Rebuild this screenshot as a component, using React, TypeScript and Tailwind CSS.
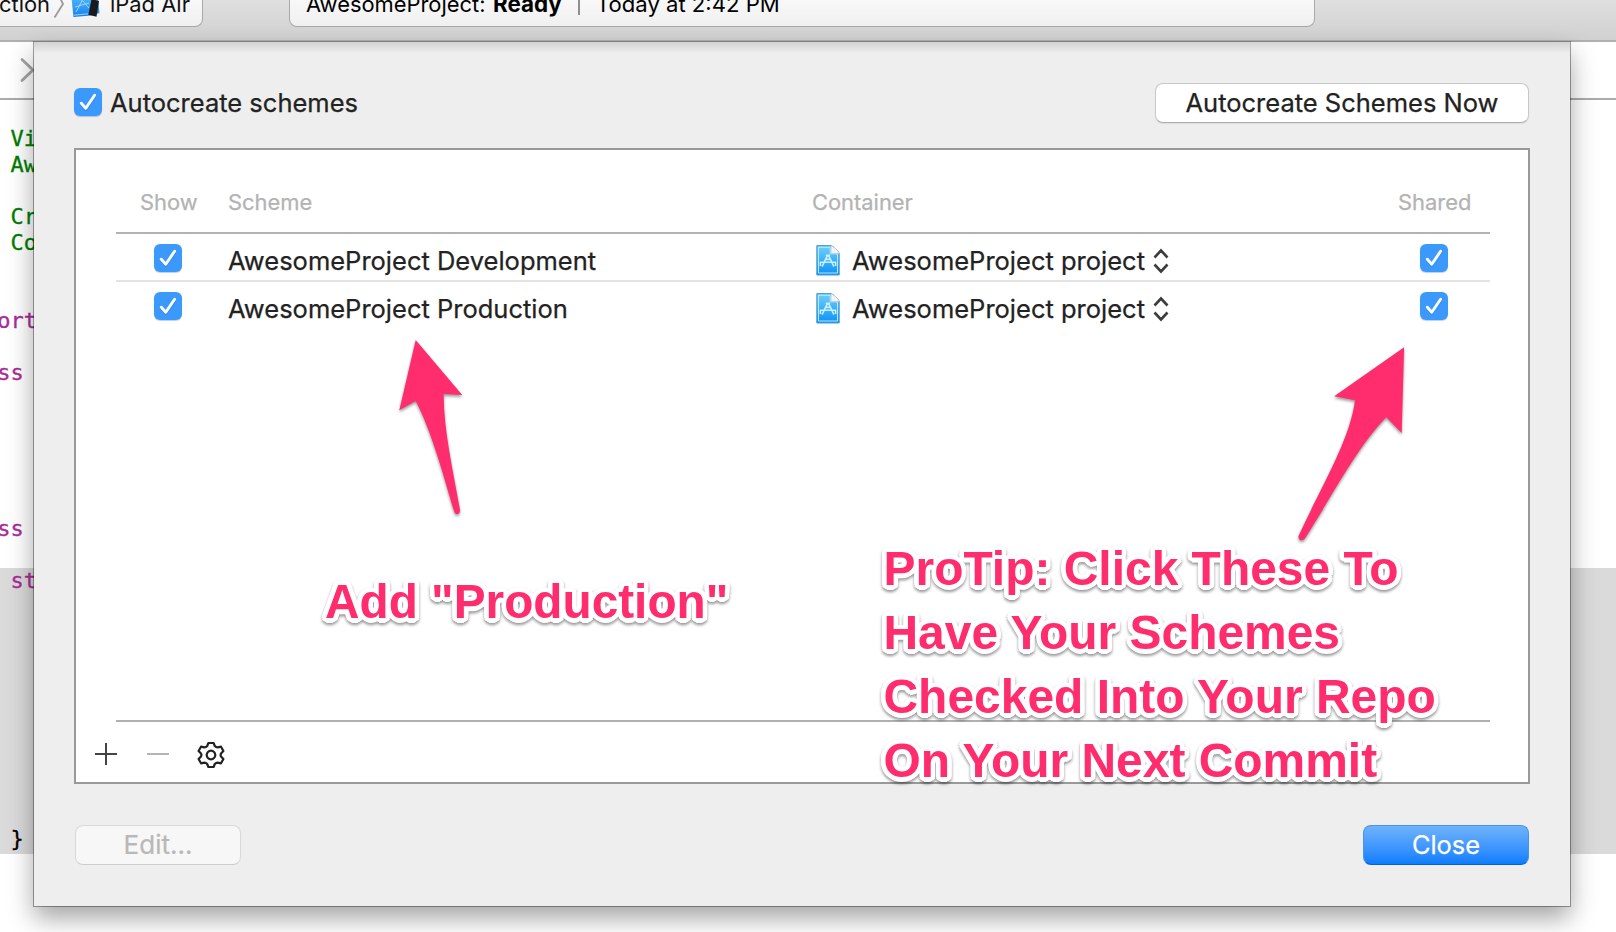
import React from "react";

const GREEN = "text-[#007d00]";
const PURPLE = "text-[#aa2b97]";

const CODE = [
  { text: "  View", c: GREEN },
  { text: "  Awes", c: GREEN },
  { text: "", c: "" },
  { text: "  Crea", c: GREEN },
  { text: "  Copy", c: GREEN },
  { text: "", c: "" },
  { text: "", c: "" },
  { text: " ort", c: PURPLE },
  { text: "", c: "" },
  { text: " ss", c: PURPLE },
  { text: "", c: "" },
  { text: "", c: "" },
  { text: "", c: "" },
  { text: "", c: "" },
  { text: "", c: "" },
  { text: " ss", c: PURPLE },
  { text: "", c: "" },
  { text: "  sta", c: PURPLE },
  { text: "", c: "" },
  { text: "", c: "" },
  { text: "", c: "" },
  { text: "", c: "" },
  { text: "", c: "" },
  { text: "", c: "" },
  { text: "", c: "" },
  { text: "", c: "" },
  { text: "", c: "" },
  { text: "  }", c: "text-black leading-[22px]" },
];

function Check() {
  return (
    <span className="block size-[28px] shrink-0 rounded-[6px] bg-[#3b99fc] shadow-[0_1px_1px_rgba(0,60,140,0.25)]">
      <svg viewBox="0 0 28 28" className="size-[28px]" fill="none">
        <path d="M7.3 15.6 L11.8 20.6 L20.6 7.6" stroke="#1f6fc4" strokeOpacity="0.35" strokeWidth="3" strokeLinecap="round" strokeLinejoin="round" transform="translate(0 1)" />
        <path d="M7.3 15.2 L11.8 20.2 L20.6 7.3" stroke="#fff" strokeWidth="2.9" strokeLinecap="round" strokeLinejoin="round" />
      </svg>
    </span>
  );
}

function ProjectIcon() {
  return (
    <svg viewBox="0 0 24 31" className="h-[31px] w-[24px] shrink-0" fill="none">
      <defs>
        <linearGradient id="doc" x1="0" y1="0" x2="0" y2="1">
          <stop offset="0" stopColor="#6fd0fb" />
          <stop offset="1" stopColor="#0a93f5" />
        </linearGradient>
      </defs>
      <path d="M0.8 0.6 H15 C17 1 23 6 23.2 9 V30 H0.8 Z" fill="url(#doc)" stroke="#4a9cc8" />
      <path d="M2.5 28 V2.3 H14.2 V8.8 H21.5 V28 Z" stroke="#c8ecff" strokeWidth="0.9" />
      <path d="M15 0.8 V8.4 H23.2 C22.5 6 18 1.6 15 0.8 Z" fill="#f4f4f4" stroke="#b9c6cc" strokeWidth="0.7" />
      <path d="M11.4 10.4 L6.4 21 M12.6 10.4 L17.6 21 M10.4 10.2 H13.6 M4.4 17.2 H19.6 M4.4 17.2 V20.4 M19.6 17.2 V20.4 M9.5 14.4 H14.5" stroke="#c9efff" strokeWidth="1.6" strokeLinecap="round" />
    </svg>
  );
}

function Arrows() {
  return (
    <svg viewBox="0 0 16 26" className="h-[26px] w-[16px] shrink-0" fill="none" stroke="#3d3d3d" strokeWidth="2.6">
      <path d="M1.5 9.5 L8 2.5 L14.5 9.5 M1.5 16.5 L8 23.5 L14.5 16.5" />
    </svg>
  );
}

function Row({ name }: { name: string }) {
  return (
    <div className="flex h-[46px] items-start text-[25.5px] leading-[30px] text-[#222]">
      <div className="w-[112px] pt-[10px] pl-[38px]"><Check /></div>
      <div className="w-[588px] pt-[12px]">{name}</div>
      <div className="flex w-[604px] pt-[11px]">
        <ProjectIcon />
        <span className="ml-[12px] pt-[1px]">AwesomeProject project</span>
        <span className="ml-[8px] pt-[3px]"><Arrows /></span>
      </div>
      <div className="-mr-[2px] pt-[10px]"><Check /></div>
    </div>
  );
}

const HALO =
  "[text-shadow:4.5px_0_#fff,4.2px_1.7px_#fff,3.2px_3.2px_#fff,1.7px_4.2px_#fff,0_4.5px_#fff,-1.7px_4.2px_#fff,-3.2px_3.2px_#fff,-4.2px_1.7px_#fff,-4.5px_0_#fff,-4.2px_-1.7px_#fff,-3.2px_-3.2px_#fff,-1.7px_-4.2px_#fff,0_-4.5px_#fff,1.7px_-4.2px_#fff,3.2px_-3.2px_#fff,4.2px_-1.7px_#fff,2px_2px_#fff,-2px_2px_#fff,2px_-2px_#fff,-2px_-2px_#fff] [filter:drop-shadow(0_2px_1.5px_rgba(0,0,0,0.42))]";

function Callout({ lines, className }: { lines: string[]; className: string }) {
  return (
    <div className={"absolute font-['Liberation_Sans',Arial,sans-serif] leading-[64px] font-bold whitespace-pre text-[#ff2d6d] " + HALO + " " + className}>
      {lines.map((l) => <div key={l}>{l}</div>)}
    </div>
  );
}

export default function App() {
  return (
    <div className="relative h-[932px] w-[1616px] overflow-hidden bg-white font-['Inter',sans-serif] text-[#222]">
      <div className="flex h-[42px] justify-start border-b-2 border-[#b0b0b0] bg-linear-to-b from-[#dfdfdf] to-[#d1d1d1] text-[21.9px] leading-[26px] text-[#111]">
        <div className="flex h-[27px] w-[203px] overflow-hidden rounded-br-[8px] border-r border-b border-[#a9a9a9] bg-linear-to-b from-[#f8f8f8] to-[#f0f0f0]">
          <span className="-mt-[9px] flex w-[50px] justify-end">ction</span>
          <svg viewBox="0 0 14 24" className="ml-[3px] h-[24px] w-[14px] shrink-0" fill="none" stroke="#9a9a9a" strokeWidth="1.8"><path d="M6 -4 L10 4 L1.5 17.5" /></svg>
          <svg viewBox="0 0 30 24" className="ml-[4px] h-[24px] w-[30px] shrink-0">
            <defs>
              <linearGradient id="app" x1="0" y1="0" x2="0" y2="1">
                <stop offset="0" stopColor="#4db4fb" />
                <stop offset="1" stopColor="#1480ee" />
              </linearGradient>
            </defs>
            <path d="M0.5 -2 H27 L28.5 13 L20 15.5 L2.5 17 Z" fill="url(#app)" />
            <path d="M2.8 15.2 L17 13.8 M5 12 L12 -1 M9 -2 L18 8 M4 7 L18 3" stroke="#9ad6ff" strokeWidth="1" fill="none" />
            <path d="M20.5 -1 L28 1 L25.5 16.8 L17.5 14.8 Z" fill="#1a1a1a" />
          </svg>
          <span className="-mt-[9px] ml-[9px] whitespace-nowrap">iPad Air</span>
        </div>
        <div className="ml-[86px] flex h-[27px] w-[1026px] overflow-hidden rounded-b-[8px] border border-t-0 border-[#a9a9a9] bg-linear-to-b from-[#f8f8f8] to-[#f0f0f0] pl-[16px] text-black">
          <span className="-mt-[9px] w-[187px] whitespace-nowrap">AwesomeProject:</span>
          <span className="-mt-[9px] w-[85px] text-[22.4px] font-bold">Ready</span>
          <span className="h-[15px] w-[2px] bg-[#8f8f8f]" />
          <span className="-mt-[9px] ml-[16px] text-[22.1px] whitespace-nowrap">Today at 2:42 PM</span>
        </div>
      </div>
      <div className="flex h-[58px] items-start border-b-2 border-[#ababab] pt-[14px] pl-[20px]">
        <svg viewBox="0 0 16 28" className="h-[28px] w-[16px]" fill="none" stroke="#a3a3a3" strokeWidth="2.8" strokeLinecap="round"><path d="M2 3.5 L13 14 L2 24.5" /></svg>
      </div>
      <div className="pt-[26px] font-['DejaVu_Sans_Mono',monospace] text-[22px] leading-[26px] whitespace-pre [-webkit-text-stroke:0.3px_currentColor]">
        {CODE.map((l, i) => (
          <div key={i} className={"h-[26px] " + l.c + (i >= 17 ? " bg-[#dadada]" : "")}>
            <span className="-ml-[16px]">{l.text}</span>
          </div>
        ))}
      </div>

      <div className="absolute top-[42px] left-[34px] flex h-[864px] w-[1536px] flex-col bg-[#eeeeee] px-[40px] shadow-[0_0_0_1px_rgba(0,0,0,0.35),0_12px_24px_rgba(0,0,0,0.36)] [-webkit-text-stroke:0.25px_currentColor]">
        <div className="absolute inset-x-0 -top-px h-[12px] border-t border-[#808080] bg-linear-to-b from-[#d2d2d2] to-[#eeeeee]" />
        <div className="flex h-[106px] items-start justify-between pt-[41px]">
          <div className="flex pt-[5px] text-[25.5px] leading-[30px]">
            <Check />
            <span className="ml-[8px]">Autocreate schemes</span>
          </div>
          <button className="mr-px h-[40px] w-[374px] rounded-[8px] border border-[#c8c8c8] border-b-[#adadad] bg-white text-[25.5px] leading-[34px] whitespace-nowrap shadow-[0_1px_1px_rgba(0,0,0,0.08)] [-webkit-text-stroke:0.25px_currentColor]">Autocreate Schemes Now</button>
        </div>
        <div className="h-[636px] w-[1456px] border-2 border-[#999999] bg-white pr-[38px] pl-[40px]">
          <div className="flex h-[84px] items-start border-b-2 border-[#b2b2b2] pt-[38px] text-[21.9px] leading-[28px] text-[#b3b3b3]">
            <span className="w-[88px] pl-[24px]">Show</span>
            <span className="ml-[24px] w-[584px]">Scheme</span>
            <span className="w-[586px]">Container</span>
            <span>Shared</span>
          </div>
          <Row name="AwesomeProject Development" />
          <div className="h-[2px] bg-[#e3e3e3]" />
          <Row name="AwesomeProject Production" />
          <div className="h-[394px] border-b-2 border-[#b0b0b0]" />
          <div className="-ml-[22px] flex pt-[18px]">
            <svg viewBox="0 0 24 28" className="h-[28px] w-[24px]" stroke="#444" strokeWidth="2"><path d="M1 14 H23 M12 3 V25" /></svg>
            <svg viewBox="0 0 24 28" className="ml-[28px] h-[28px] w-[24px]" stroke="#b5b5b5" strokeWidth="2"><path d="M1 14 H23" /></svg>
            <svg viewBox="-15 -15 30 30" className="ml-[26px] h-[30px] w-[30px]" fill="none" stroke="#222" strokeWidth="2.2" strokeLinejoin="round">
              <circle r="4.3" />
              <path d="M-2.6 -12 H2.6 L3.8 -9 Q5 -7.6 6.6 -7.6 L10 -8.3 L12.4 -4 L10 -1.5 Q9.2 0 10 1.5 L12.4 4 L10 8.3 L6.6 7.6 Q5 7.6 3.8 9 L2.6 12 H-2.6 L-3.8 9 Q-5 7.6 -6.6 7.6 L-10 8.3 L-12.4 4 L-10 1.5 Q-9.2 0 -10 -1.5 L-12.4 -4 L-10 -8.3 L-6.6 -7.6 Q-5 -7.6 -3.8 -9 Z" />
            </svg>
          </div>
        </div>
        <div className="flex justify-between px-px pt-[41px] text-[25.4px] leading-[36px]">
          <button className="h-[40px] w-[166px] rounded-[8px] border border-[#d9d9d9] border-b-[#cecece] bg-[#f7f7f7] text-[26px] text-[#b8b8b8] [-webkit-text-stroke:0.2px_currentColor]">Edit...</button>
          <button className="h-[40px] w-[166px] rounded-[8px] border border-[#4a94e0] border-b-[#0a5fd6] bg-linear-to-b from-[#6db3fa] to-[#087dff] text-white">Close</button>
        </div>
      </div>

      <svg viewBox="0 0 1616 932" className="pointer-events-none absolute inset-0 h-[932px] w-[1616px] [filter:drop-shadow(0_2px_1.5px_rgba(0,0,0,0.4))]" fill="#ff2d6d">
        <path d="M415.7 340 L462.3 395 L443.7 394 C443.5 430 453 470 460 510 C460.3 515 455 515.5 454 511 C444 478 432 432 415.7 401 L399.3 410.3 Z" />
        <path d="M1404.1 347.3 L1334.1 396.3 L1355 400.3 C1350 440 1322 485 1298.5 536 C1298 541 1303 541.5 1305.2 538 C1330 500 1356 448 1386.3 417.3 L1401.7 433 Z" />
      </svg>
      <Callout className="top-[570px] left-[325px] text-[47.75px]" lines={['Add "Production"']} />
      <Callout className="top-[537px] left-[883.5px] text-[47.95px]" lines={["ProTip: Click These To", "Have Your Schemes", "Checked Into Your Repo", "On Your Next Commit"]} />
    </div>
  );
}
